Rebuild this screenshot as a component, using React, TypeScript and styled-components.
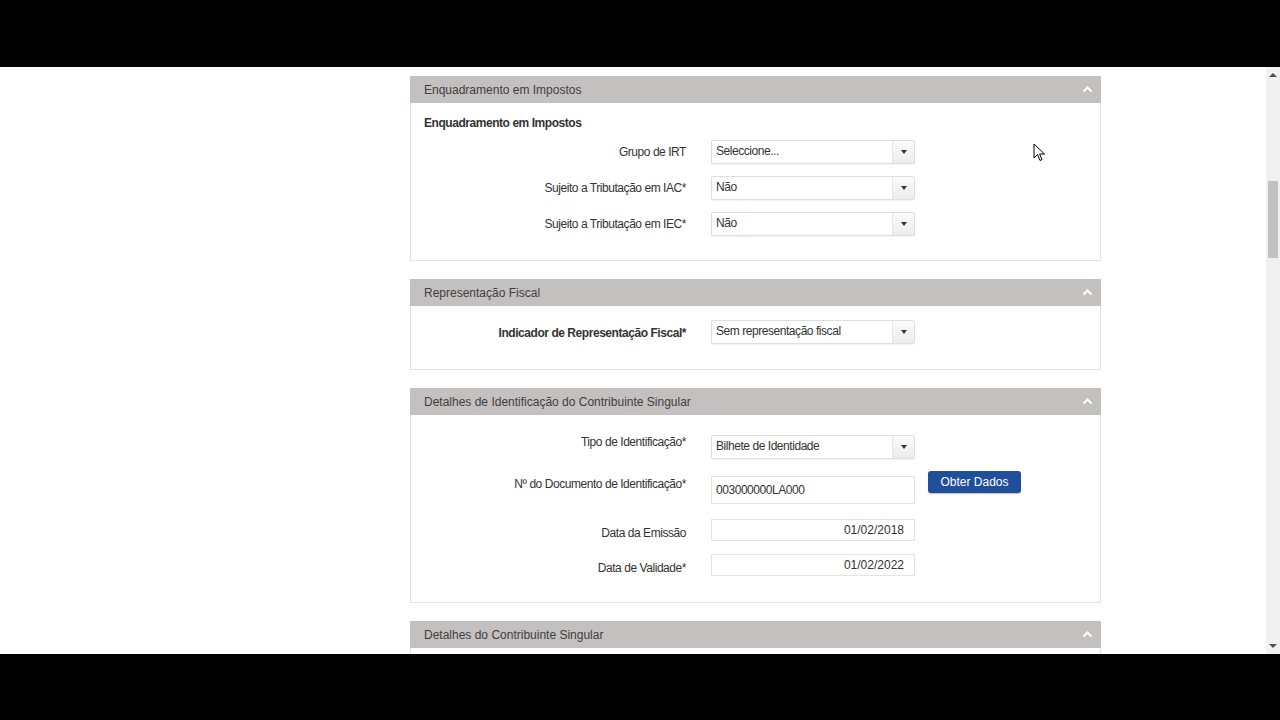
import React from 'react';
import styled, { createGlobalStyle } from 'styled-components';

const GlobalStyle = createGlobalStyle`
  html, body {
    margin: 0;
    padding: 0;
    background: #000;
  }

  body {
    font-family: "Liberation Sans", Arial, sans-serif;
  }
`;

const Screen = styled.div`
  display: flex;
  flex-direction: column;
  width: 1280px;
  height: 720px;
  background: #000;
`;

const Letterbox = styled.div<{ $h: number }>`
  flex: none;
  height: ${(p) => p.$h}px;
  background: #000;
`;

const Viewport = styled.div`
  position: relative;
  display: flex;
  flex: none;
  height: 587px;
  overflow: hidden;
  background: #fff;
`;

const Page = styled.main`
  display: flex;
  flex: 1;
  flex-direction: column;
  gap: 18px;
  min-width: 0;
  padding: 9px 0 0 410px;
`;

const Panel = styled.section`
  flex: none;
  width: 691px;
`;

const PanelHeader = styled.header`
  display: flex;
  align-items: center;
  justify-content: space-between;
  box-sizing: border-box;
  height: 27px;
  padding: 0 8px 0 14px;
  background: #c4c0c0;
  color: #3e3e3e;
  font-size: 12px;
`;

const PanelBody = styled.div<{ $pt: number; $pb: number }>`
  display: flex;
  flex-direction: column;
  padding: ${(p) => p.$pt}px 0 ${(p) => p.$pb}px;
  border: 1px solid #e3e3e3;
  border-top: none;
`;

const Subtitle = styled.h3`
  margin: 0 0 9px 13px;
  color: #333;
  font-size: 12px;
  font-weight: bold;
  letter-spacing: -0.45px;
  line-height: 15px;
`;

const Row = styled.div<{ $mt?: number }>`
  display: flex;
  align-items: flex-start;
  margin-top: ${(p) => p.$mt ?? 0}px;
`;

const Label = styled.label<{ $pad?: number; $bold?: boolean }>`
  box-sizing: border-box;
  width: 275px;
  margin-right: 25px;
  padding-top: ${(p) => p.$pad ?? 5}px;
  color: #333;
  font-size: 12px;
  font-weight: ${(p) => (p.$bold ? 'bold' : 'normal')};
  letter-spacing: -0.45px;
  line-height: 14px;
  text-align: right;
`;

const SelectBox = styled.div`
  display: flex;
  box-sizing: border-box;
  width: 204px;
  height: 24px;
  border: 1px solid #dedede;
  border-radius: 2px;
  background: #fff;
  box-shadow: 0 1px 1px rgba(0, 0, 0, 0.05);
`;

const SelectText = styled.span`
  flex: 1;
  padding: 0 4px;
  color: #333;
  font-size: 12px;
  letter-spacing: -0.45px;
  line-height: 21px;
`;

const SelectArrow = styled.span`
  display: flex;
  align-items: center;
  justify-content: center;
  width: 21px;
  border-left: 1px solid #e6e6e6;
  background: linear-gradient(#fbfbfb, #ececec);

  &::after {
    content: '';
    border-top: 4px solid #333;
    border-right: 3.5px solid transparent;
    border-left: 3.5px solid transparent;
  }
`;

const TextInput = styled.div<{ $h: number; $right?: boolean }>`
  box-sizing: border-box;
  width: 204px;
  height: ${(p) => p.$h}px;
  padding: 0 10px 0 4px;
  border: 1px solid #e4e4e4;
  background: #fff;
  color: #333;
  font-size: 12px;
  letter-spacing: ${(p) => (p.$right ? '0' : '-0.45px')};
  line-height: ${(p) => p.$h - 2}px;
  text-align: ${(p) => (p.$right ? 'right' : 'left')};
`;

const PrimaryButton = styled.button`
  width: 93px;
  height: 22px;
  margin: -5px 0 0 13px;
  padding: 0;
  border: none;
  border-radius: 3px;
  background: #1f4f9b;
  color: #fff;
  font-family: "Liberation Sans", Arial, sans-serif;
  font-size: 12px;
  box-shadow: 0 1px 1px rgba(0, 0, 0, 0.25);
`;

const Scrollbar = styled.div`
  display: flex;
  flex: none;
  flex-direction: column;
  width: 14px;
  background: #f1f1f1;
`;

const ScrollArrow = styled.div<{ $down?: boolean }>`
  display: flex;
  flex: none;
  align-items: center;
  justify-content: center;
  height: 16px;

  &::after {
    content: '';
    border-left: 4px solid transparent;
    border-right: 4px solid transparent;
    ${(p) => (p.$down ? 'border-top: 4px solid #505050;' : 'border-bottom: 4px solid #505050;')}
  }
`;

const ScrollTrack = styled.div`
  flex: 1;
  padding: 0 2px;
`;

const ScrollThumb = styled.div`
  height: 77px;
  margin-top: 98px;
  background: #c1c1c1;
`;

const Cursor = styled.svg`
  position: absolute;
  top: 76px;
  left: 1033px;
`;

const Chevron = () => (
  <svg width="11" height="7" viewBox="0 0 11 7">
    <polyline points="1.5,5.5 5.5,1.5 9.5,5.5" fill="none" stroke="#fff" strokeWidth="2" />
  </svg>
);

const Select = ({ value }: { value: string }) => (
  <SelectBox>
    <SelectText>{value}</SelectText>
    <SelectArrow />
  </SelectBox>
);

const PanelTitle = ({ title }: { title: string }) => (
  <PanelHeader>
    <span>{title}</span>
    <Chevron />
  </PanelHeader>
);

export default function App() {
  return (
    <Screen>
      <GlobalStyle />
      <Letterbox $h={67} />
      <Viewport>
        <Page>
          <Panel>
            <PanelTitle title="Enquadramento em Impostos" />
            <PanelBody $pt={13} $pb={24}>
              <Subtitle>Enquadramento em Impostos</Subtitle>
              <Row>
                <Label>Grupo de IRT</Label>
                <Select value="Seleccione..." />
              </Row>
              <Row $mt={12}>
                <Label>Sujeito a Tributação em IAC*</Label>
                <Select value="Não" />
              </Row>
              <Row $mt={12}>
                <Label>Sujeito a Tributação em IEC*</Label>
                <Select value="Não" />
              </Row>
            </PanelBody>
          </Panel>

          <Panel>
            <PanelTitle title="Representação Fiscal" />
            <PanelBody $pt={14} $pb={25}>
              <Row>
                <Label $bold $pad={6}>Indicador de Representação Fiscal*</Label>
                <Select value="Sem representação fiscal" />
              </Row>
            </PanelBody>
          </Panel>

          <Panel>
            <PanelTitle title="Detalhes de Identificação do Contribuinte Singular" />
            <PanelBody $pt={20} $pb={26}>
              <Row>
                <Label $pad={0}>Tipo de Identificação*</Label>
                <Select value="Bilhete de Identidade" />
              </Row>
              <Row $mt={17}>
                <Label $pad={1}>Nº do Documento de Identificação*</Label>
                <TextInput $h={28}>003000000LA000</TextInput>
                <PrimaryButton>Obter Dados</PrimaryButton>
              </Row>
              <Row $mt={15}>
                <Label $pad={7}>Data da Emissão</Label>
                <TextInput $h={22} $right>01/02/2018</TextInput>
              </Row>
              <Row $mt={13}>
                <Label $pad={7}>Data de Validade*</Label>
                <TextInput $h={22} $right>01/02/2022</TextInput>
              </Row>
            </PanelBody>
          </Panel>

          <Panel>
            <PanelTitle title="Detalhes do Contribuinte Singular" />
            <PanelBody $pt={40} $pb={0} />
          </Panel>
        </Page>

        <Scrollbar>
          <ScrollArrow />
          <ScrollTrack>
            <ScrollThumb />
          </ScrollTrack>
          <ScrollArrow $down />
        </Scrollbar>

        <Cursor width="13" height="19" viewBox="0 0 13 19">
          <path
            d="M1 1 L1 15 L4.5 11.5 L7 17.5 L9 16.6 L6.6 11 L11.5 11 Z"
            fill="#fff"
            stroke="#000"
            strokeWidth="1"
            strokeLinejoin="round"
          />
        </Cursor>
      </Viewport>
      <Letterbox $h={66} />
    </Screen>
  );
}
